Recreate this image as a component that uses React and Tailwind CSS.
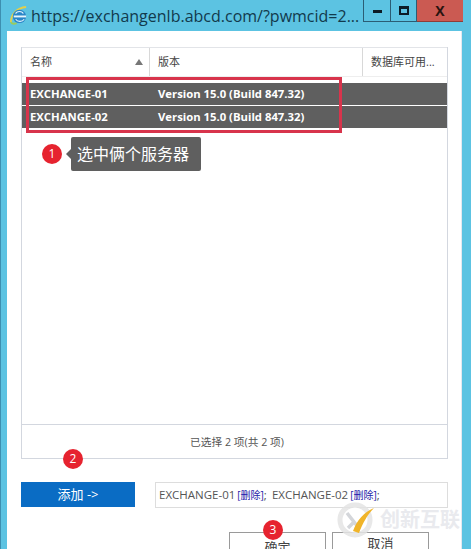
const SANS = { fontFamily: '"Open Sans", "Noto Sans CJK SC", sans-serif' };

function Badge({ n, className }) {
  return (
    <div className={`absolute w-[20px] h-[20px] rounded-full bg-[#e6232f] text-white text-[12px] leading-[20px] text-center ${className}`}>
      {n}
    </div>
  );
}

function Row({ name }) {
  return (
    <div className="flex items-center h-[22px] bg-[#5f5f5f] text-white text-[11.3px] font-bold">
      <div className="w-[128px] pl-[8px]">{name}</div>
      <div className="pl-[8px]">Version 15.0 (Build 847.32)</div>
    </div>
  );
}

export default function App() {
  return (
    <div
      className="relative w-[471px] h-[549px] overflow-hidden bg-[#5cc3e2] flex flex-col border-l border-[#3d8fb0]"
      style={SANS}
    >
      {/* Title bar */}
      <div className="h-[31px] flex items-center shrink-0">
        <svg width="19" height="19" viewBox="0 0 20 20" className="ml-[8px] mr-[3px] shrink-0">
          <path d="M2 17C2 9 8 2 18 1" fill="none" stroke="#e3cf4a" strokeWidth="2" />
          <path d="M2 17C3 19 6 19 8 18" fill="none" stroke="#9ccb5c" strokeWidth="2" />
          <circle cx="11" cy="11" r="7" fill="#2a86c8" />
          <rect x="5" y="10" width="13" height="2" fill="#e6f5fc" />
          <path d="M7 8C8 5 14 5 15 8" fill="none" stroke="#e6f5fc" strokeWidth="1.2" />
          <path d="M7 14C9 17 14 17 16 14" fill="none" stroke="#e6f5fc" strokeWidth="1.2" />
        </svg>
        <div className="text-[16px] text-[#123a4c] whitespace-nowrap w-[332px] leading-none">
          https://exchangenlb.abcd.com/?pwmcid=2...
        </div>
        <div className="flex self-start h-[22px]">
          <div className="w-[28px] h-full border border-t-0 border-[#2b5d74] flex items-center justify-center">
            <div className="w-[9px] h-[3px] mt-[1px] bg-[#0c1c26]" />
          </div>
          <div className="w-[26px] h-full border-b border-r border-[#2b5d74] flex items-center justify-center">
            <div className="w-[10px] h-[9px] border-2 border-t-[3px] border-[#0c1c26]" />
          </div>
          <div className="w-[46px] h-full bg-[#cb5a52] border-b border-[#8f3d38] flex items-center justify-center text-[14px] font-bold text-[#2a1410]">
            X
          </div>
        </div>
      </div>

      {/* Client area */}
      <div className="flex-1 flex flex-col bg-white ml-[6px] mr-[9px] border-r border-[#e4e8ef] pl-[14px] pr-[13px] pt-[16px] min-h-0">
        {/* List */}
        <div className="h-[412px] shrink-0 border-x border-b border-[#d3d7df] flex flex-col">
          <div className="h-[30px] flex border-t border-[#e2e4e8] text-[11px] text-[#444] shrink-0 border-b border-b-[#eeeeee]">
            <div className="w-[128px] pl-[8px] flex items-center justify-between pr-[6px] border-r border-[#d8d8d8]">
              <span>名称</span>
              <span className="w-0 h-0 border-x-[4px] border-x-transparent border-b-[6px] border-b-[#777]" />
            </div>
            <div className="w-[213px] pl-[8px] flex items-center border-r border-[#d8d8d8]">版本</div>
            <div className="pl-[8px] flex items-center flex-1 whitespace-nowrap">数据库可用...</div>
          </div>
          <div className="flex flex-col pt-[6px] gap-px">
            <Row name="EXCHANGE-01" />
            <Row name="EXCHANGE-02" />
          </div>
          <div className="flex-1" />
          <div className="h-[34px] shrink-0 border-t border-[#d3d7df] flex items-center justify-center pl-[5px] pt-[2px] text-[10.7px] text-[#555]">
            已选择 2 项(共 2 项)
          </div>
        </div>

        {/* Add row */}
        <div className="flex mt-[23px] items-start shrink-0">
          <div className="w-[114px] h-[25px] bg-[#0a6cc4] text-white text-[13px] flex items-center justify-center">
            添加 -&gt;
          </div>
          <div className="ml-[20px] flex-1 h-[26px] border border-[#dddddd] flex items-center pl-[3px] text-[11.5px] text-[#555] whitespace-nowrap">
            EXCHANGE-01<span className="text-[10px] text-[#1a1aa8] ml-[2px]">[删除]</span><span className="mr-[5px]">;</span>EXCHANGE-02<span className="text-[10px] text-[#1a1aa8] ml-[2px]">[删除]</span>;
          </div>
        </div>

        {/* Buttons */}
        <div className="flex justify-end gap-[6px] mt-[24px] pr-[19px] shrink-0">
          <div className="w-[97px] h-[30px] border border-[#9a9a9a] text-center text-[13px] text-[#444] pt-[5px]">确定</div>
          <div className="w-[97px] h-[30px] border border-[#9a9a9a] text-center text-[13px] text-[#444] pt-[1px]">取消</div>
        </div>
      </div>

      {/* Annotations */}
      <div className="absolute left-[25px] top-[77px] w-[316px] h-[56px] border-[3px] border-[#d8344c]" />
      <Badge n="1" className="left-[41px] top-[144px]" />
      <div className="absolute left-[70px] top-[137px] w-[130px] h-[34px] bg-[#5f5f5f] rounded-[2px] text-white text-[16px] flex items-center pl-[6px]">
        <span className="absolute left-[-5px] top-[12px] w-0 h-0 border-y-[5px] border-y-transparent border-r-[5px] border-r-[#5f5f5f]" />
        选中俩个服务器
      </div>
      <Badge n="2" className="left-[62px] top-[449px]" />
      <Badge n="3" className="left-[262px] top-[520px]" />

      {/* Watermark */}
      <div className="absolute left-[335px] top-[500px] flex items-center gap-[4px]">
        <svg width="40" height="40" viewBox="0 0 40 40">
          <circle cx="19" cy="20" r="15" fill="#ffffff" stroke="#e4e4e4" strokeWidth="5" opacity="0.85" />
          <path d="M11 13L22 27M12 28L19 21" stroke="#d4d6da" strokeWidth="3.5" fill="none" />
          <path d="M17 31C21 20 28 12 38 8C31 15 27 23 23 33Z" fill="#f0b429" />
        </svg>
        <span className="text-[20px] font-bold text-[#e9eaee] whitespace-nowrap leading-none">创新互联</span>
      </div>
    </div>
  );
}
